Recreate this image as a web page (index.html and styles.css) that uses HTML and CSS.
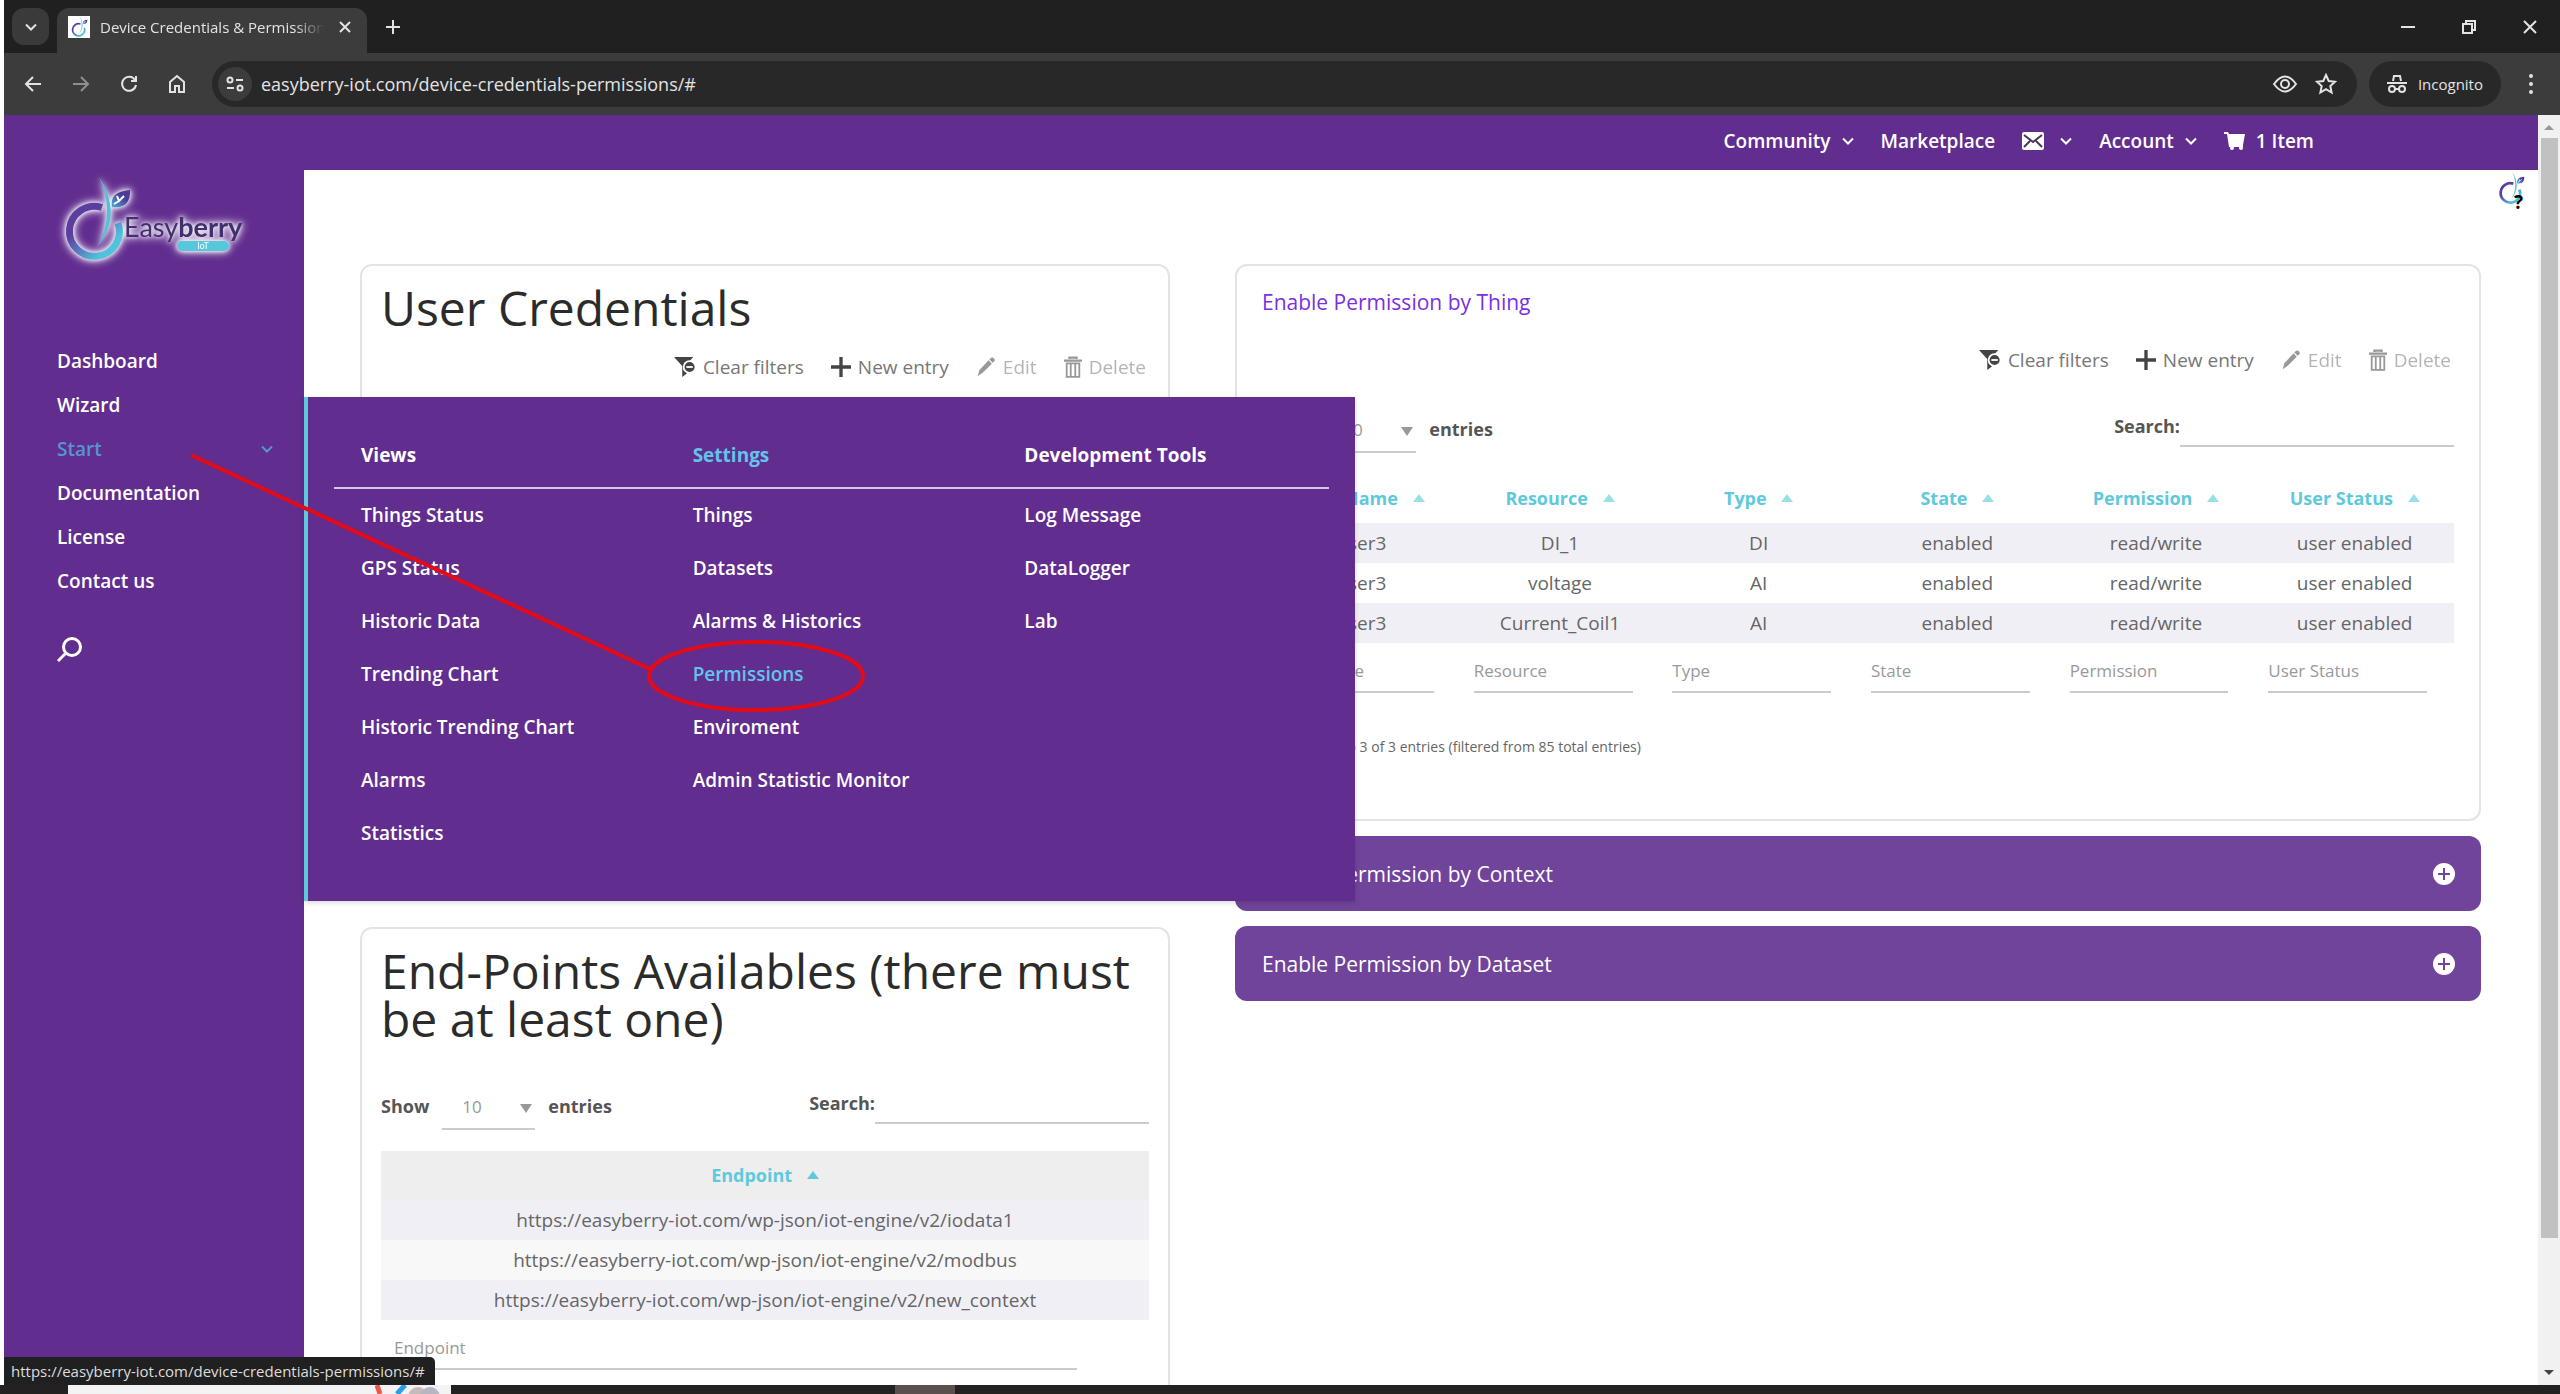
FILE: index.html
```html
<!DOCTYPE html>
<html lang="en">
<head>
<meta charset="utf-8">
<title>Device Credentials &amp; Permissions</title>
<link rel="stylesheet" href="styles.css">
</head>
<body>
  <svg class="defs" aria-hidden="true">
    <defs>
      <linearGradient id="berry" x1="0" y1="0" x2="1" y2="1">
        <stop offset="0.3" stop-color="#5b3fa0"/>
        <stop offset="0.8" stop-color="#4fc3dc"/>
      </linearGradient>
      <linearGradient id="leaf" x1="0" y1="1" x2="1" y2="0">
        <stop offset="0" stop-color="#4fb0dc"/>
        <stop offset="0.6" stop-color="#4a3f98"/>
      </linearGradient>
      <symbol id="logo" viewBox="0 0 72 90">
        <path d="M42 32.500 A25 25 0 1 0 58 48" fill="none" stroke="url(#berry)" stroke-width="7"/>
        <path d="M39 2 C53 24 57 48 37 72 C50 50 50 26 39 2Z" fill="#4fc3dc"/>
        <path d="M52 32 C50 20 58 16 70 15 C71 27 64 34 52 32Z" fill="url(#leaf)"/>
        <path d="M57 21 l2 5 l5 -5 M54 29 l5 -3" fill="none" stroke="#fff" stroke-width="2"/>
      </symbol>
      <symbol id="chevron" viewBox="0 0 12 8">
        <path d="M1 1.5 L6 6.5 L11 1.5" fill="none" stroke="currentColor" stroke-width="2"/>
      </symbol>
      <symbol id="filter" viewBox="0 0 24 24">
        <path d="M0 1 H21 L14 9 V19 L9 23 V11Z" fill="currentColor"/>
        <circle cx="17" cy="12" r="6.5" fill="currentColor" stroke="#fff" stroke-width="2"/>
        <path d="M13.500 12 H20.500" stroke="#fff" stroke-width="2"/>
      </symbol>
      <symbol id="plus" viewBox="0 0 24 24">
        <path d="M12 0 V24 M0 12 H24" stroke="currentColor" stroke-width="4"/>
      </symbol>
      <symbol id="pencil" viewBox="0 0 24 24">
        <path d="M2 23 L4 16 L15 4 L19 8 L8 19Z M16 3 L18 1 Q20 0 22 2 Q23 4 22 5 L20 7Z" fill="currentColor"/>
      </symbol>
      <symbol id="trash" viewBox="0 0 20 24">
        <path d="M0 5 H20 M6 3 V1.500 H14 V3" fill="none" stroke="currentColor" stroke-width="2.500"/>
        <path d="M3 8 V23 H17 V8Z M7.500 9 V22 M12.500 9 V22" fill="none" stroke="currentColor" stroke-width="2"/>
      </symbol>
      <symbol id="circle-plus" viewBox="0 0 24 24">
        <circle cx="12" cy="12" r="11" fill="#fff"/>
        <path d="M12 6 V18 M6 12 H18" stroke="#71449b" stroke-width="2"/>
      </symbol>
    </defs>
  </svg>

  <header class="browser">
    <div class="tab-strip">
      <button class="tab-search" aria-label="Search tabs"><svg width="12" height="8"><use href="#chevron"/></svg></button>
      <div class="tab">
        <span class="favicon"><svg width="18" height="22"><use href="#logo"/></svg></span>
        <span class="tab-title">Device Credentials &amp; Permissions</span>
        <button class="plain" aria-label="Close tab"><svg width="12" height="12" viewBox="0 0 12 12"><path d="M1 1 L11 11 M11 1 L1 11"/></svg></button>
      </div>
      <button class="plain new-tab" aria-label="New tab"><svg width="16" height="16" viewBox="0 0 16 16"><path d="M8 1 V15 M1 8 H15"/></svg></button>
      <div class="window-buttons">
        <button class="plain" aria-label="Minimize"><svg width="14" height="14" viewBox="0 0 14 14"><path d="M0 7 H14"/></svg></button>
        <button class="plain" aria-label="Restore"><svg width="14" height="14" viewBox="0 0 14 14"><path d="M1 4 H10 V13 H1Z M4 4 V1 H13 V10 H10"/></svg></button>
        <button class="plain" aria-label="Close"><svg width="14" height="14" viewBox="0 0 14 14"><path d="M1 1 L13 13 M13 1 L1 13"/></svg></button>
      </div>
    </div>
    <div class="toolbar">
      <button class="plain" aria-label="Back"><svg width="18" height="18" viewBox="0 0 18 18"><path d="M17 9 H2 M9 2 L2 9 L9 16"/></svg></button>
      <button class="plain off" aria-label="Forward"><svg width="18" height="18" viewBox="0 0 18 18"><path d="M1 9 H16 M9 2 L16 9 L9 16"/></svg></button>
      <button class="plain" aria-label="Reload"><svg width="18" height="18" viewBox="0 0 18 18"><path d="M15 5 A7 7 0 1 0 16 10 M16 1 V6 H11"/></svg></button>
      <button class="plain" aria-label="Home"><svg width="18" height="20" viewBox="0 0 18 20"><path d="M2 8 L9 2 L16 8 V18 H11 V12 H7 V18 H2Z"/></svg></button>
      <div class="address">
        <span class="site-info"><svg width="18" height="16" viewBox="0 0 18 16"><circle cx="4" cy="4" r="2.500"/><path d="M10 4 H17 M1 12 H8"/><circle cx="14" cy="12" r="2.500"/></svg></span>
        <input type="text" aria-label="Address" value="easyberry-iot.com/device-credentials-permissions/#">
        <svg width="26" height="18" viewBox="0 0 26 18"><path d="M2 9 Q13 -6 24 9 Q13 24 2 9Z"/><circle cx="13" cy="9" r="4"/></svg>
        <svg width="22" height="22" viewBox="0 0 22 22"><path d="M11 2 L13.700 8 L20 8.700 L15.300 13 L16.600 19.500 L11 16.200 L5.400 19.500 L6.700 13 L2 8.700 L8.300 8Z"/></svg>
      </div>
      <div class="incognito">
        <svg width="20" height="20" viewBox="0 0 20 20"><path d="M6 7 L7 2 H13 L14 7 M0 9 H20"/><circle cx="5" cy="15" r="3"/><circle cx="15" cy="15" r="3"/><path d="M8 15 H12"/></svg>
        Incognito
      </div>
      <button class="plain dots" aria-label="Menu"><svg width="4" height="20" viewBox="0 0 4 20"><circle cx="2" cy="2" r="1"/><circle cx="2" cy="10" r="1"/><circle cx="2" cy="18" r="1"/></svg></button>
    </div>
  </header>

  <div class="viewport">
    <aside class="sidebar">
      <div class="brand">
        <svg class="brand-mark" width="72" height="90"><use href="#logo"/></svg>
        <span class="brand-name">Easy<b>berry</b><small>IoT</small></span>
      </div>
      <nav class="side-nav">
        <a href="#">Dashboard</a>
        <a href="#">Wizard</a>
        <a href="#" class="active">Start <svg width="12" height="8"><use href="#chevron"/></svg></a>
        <a href="#">Documentation</a>
        <a href="#">License</a>
        <a href="#">Contact us</a>
      </nav>
      <button class="plain side-search" aria-label="Search"><svg width="26" height="26" viewBox="0 0 26 26"><circle cx="15" cy="10" r="8.500"/><path d="M9 16 L1 24"/></svg></button>

      <div class="mega-menu">
        <div class="mega-heads">
          <a href="#">Views</a>
          <a href="#" class="hover">Settings</a>
          <a href="#">Development Tools</a>
        </div>
        <div class="mega-columns">
          <div class="mega-column">
            <a href="#">Things Status</a>
            <a href="#">GPS Status</a>
            <a href="#">Historic Data</a>
            <a href="#">Trending Chart</a>
            <a href="#">Historic Trending Chart</a>
            <a href="#">Alarms</a>
            <a href="#">Statistics</a>
          </div>
          <div class="mega-column">
            <a href="#">Things</a>
            <a href="#">Datasets</a>
            <a href="#">Alarms &amp; Historics</a>
            <a href="#" class="hover">Permissions</a>
            <a href="#">Enviroment</a>
            <a href="#">Admin Statistic Monitor</a>
          </div>
          <div class="mega-column">
            <a href="#">Log Message</a>
            <a href="#">DataLogger</a>
            <a href="#">Lab</a>
          </div>
        </div>
      </div>
      <!-- red pointer from Start to Permissions -->
      <svg class="pointer" width="700" height="280" viewBox="0 0 700 280">
        <path d="M10 15 L469 229"/>
        <ellipse cx="575" cy="236" rx="107" ry="34"/>
      </svg>
    </aside>

    <div class="page">
      <nav class="top-nav">
        <a href="#">Community <svg width="12" height="8"><use href="#chevron"/></svg></a>
        <a href="#">Marketplace</a>
        <a href="#" class="mail" aria-label="Messages">
          <svg width="22" height="18" viewBox="0 0 22 18"><rect width="22" height="18" rx="2" fill="#fff"/><path d="M2 3 L11 10 L20 3 M2 15 L8 9 M20 15 L14 9" fill="none" stroke="#47365c" stroke-width="2"/></svg>
          <svg width="12" height="8"><use href="#chevron"/></svg>
        </a>
        <a href="#">Account <svg width="12" height="8"><use href="#chevron"/></svg></a>
        <a href="#"><svg width="21" height="18" viewBox="0 0 21 18"><path d="M0 0 H4 L5 2 H21 L19 13 H19 V15 H5 L3 2 H0Z" fill="#fff"/><circle cx="8" cy="16" r="2" fill="#fff"/><circle cx="17" cy="16" r="2" fill="#fff"/></svg> 1 Item</a>
      </nav>
      <a href="#" class="help" aria-label="Help"><svg width="28" height="35"><use href="#logo"/></svg><b>?</b></a>

      <main class="content">
        <div class="column">
          <section class="card credentials">
            <h1>User Credentials</h1>
            <div class="actions">
              <button><svg width="22" height="24"><use href="#filter"/></svg>Clear filters</button>
              <button><svg width="20" height="22"><use href="#plus"/></svg>New entry</button>
              <button disabled><svg width="20" height="22"><use href="#pencil"/></svg>Edit</button>
              <button disabled><svg width="18" height="22"><use href="#trash"/></svg>Delete</button>
            </div>
          </section>

          <section class="card endpoints">
            <h1>End-Points Availables (there must be at least one)</h1>
            <div class="controls">
              <label class="length">Show <span class="select"><select><option>10</option></select></span> entries</label>
              <label class="search">Search:<input type="search"></label>
            </div>
            <table>
              <thead>
                <tr><th>Endpoint <i class="sort"></i></th></tr>
              </thead>
              <tbody>
                <tr><td>https://easyberry-iot.com/wp-json/iot-engine/v2/iodata1</td></tr>
                <tr><td>https://easyberry-iot.com/wp-json/iot-engine/v2/modbus</td></tr>
                <tr><td>https://easyberry-iot.com/wp-json/iot-engine/v2/new_context</td></tr>
              </tbody>
              <tfoot>
                <tr><td><input type="text" placeholder="Endpoint" aria-label="Endpoint"></td></tr>
              </tfoot>
            </table>
          </section>
        </div>

        <div class="column">
          <section class="card permissions">
            <h2>Enable Permission by Thing</h2>
            <div class="actions">
              <button><svg width="22" height="24"><use href="#filter"/></svg>Clear filters</button>
              <button><svg width="20" height="22"><use href="#plus"/></svg>New entry</button>
              <button disabled><svg width="20" height="22"><use href="#pencil"/></svg>Edit</button>
              <button disabled><svg width="18" height="22"><use href="#trash"/></svg>Delete</button>
            </div>
            <div class="controls">
              <label class="length">Show <span class="select"><select><option>10</option></select></span> entries</label>
              <label class="search">Search:<input type="search"></label>
            </div>
            <table>
              <thead>
                <tr>
                  <th>User Name <i class="sort"></i></th>
                  <th>Resource <i class="sort"></i></th>
                  <th>Type <i class="sort"></i></th>
                  <th>State <i class="sort"></i></th>
                  <th>Permission <i class="sort"></i></th>
                  <th>User Status <i class="sort"></i></th>
                </tr>
              </thead>
              <tbody>
                <tr><td>user3</td><td>DI_1</td><td>DI</td><td>enabled</td><td>read/write</td><td>user enabled</td></tr>
                <tr><td>user3</td><td>voltage</td><td>AI</td><td>enabled</td><td>read/write</td><td>user enabled</td></tr>
                <tr><td>user3</td><td>Current_Coil1</td><td>AI</td><td>enabled</td><td>read/write</td><td>user enabled</td></tr>
              </tbody>
              <tfoot>
                <tr>
                  <td><input type="text" placeholder="User Name" aria-label="User Name"></td>
                  <td><input type="text" placeholder="Resource" aria-label="Resource"></td>
                  <td><input type="text" placeholder="Type" aria-label="Type"></td>
                  <td><input type="text" placeholder="State" aria-label="State"></td>
                  <td><input type="text" placeholder="Permission" aria-label="Permission"></td>
                  <td><input type="text" placeholder="User Status" aria-label="User Status"></td>
                </tr>
              </tfoot>
            </table>
            <p class="info">Showing 1 to 3 of 3 entries (filtered from 85 total entries)</p>
          </section>
          <button class="accordion">Enable Permission by Context <svg width="24" height="24"><use href="#circle-plus"/></svg></button>
          <button class="accordion">Enable Permission by Dataset <svg width="24" height="24"><use href="#circle-plus"/></svg></button>
        </div>
      </main>
    </div>

    <div class="scrollbar">
      <span class="arrow up"></span>
      <span class="thumb"></span>
      <span class="arrow down"></span>
    </div>
    <div class="status">https://easyberry-iot.com/device-credentials-permissions/#</div>
  </div>

  <footer class="taskbar">
    <div class="taskbar-search"><svg width="76" height="9" viewBox="0 0 76 9"><path d="M2 0 L5 9" stroke="#f0564a" stroke-width="5"/><path d="M30 0 L22 9" stroke="#28a0e8" stroke-width="5"/><circle cx="43" cy="12" r="10" fill="#c4bcb8"/><circle cx="55" cy="12" r="10" fill="#b7b5bf"/></svg></div>
    <span class="taskbar-item"></span>
  </footer>
</body>
</html>
```
FILE: styles.css
```css
:root {
  --purple: #612d8f;
  --purple-light: #71449b;
  --cyan: #5fc9dc;
  --text: #666;
  --line: #cbcbcb;
}

* {
  box-sizing: border-box;
}

body {
  margin: 0;
  height: 100vh;
  display: flex;
  flex-direction: column;
  overflow: hidden;
  font-family: "Open Sans", "Noto Sans", sans-serif;
  font-size: 19px;
  color: var(--text);
  background: #fff;
}

a {
  color: inherit;
  text-decoration: none;
}

button, input, select {
  font: inherit;
  color: inherit;
}

svg {
  flex: none;
}

.defs {
  position: absolute;
  width: 0;
  height: 0;
}

.plain {
  display: flex;
  align-items: center;
  justify-content: center;
  padding: 0;
  border: 0;
  background: none;
}

/* browser frame */
.browser {
  flex: none;
  margin-left: 4px;
  background: #3c3c3c;
  color: #e3e3e3;
  font-size: 15px;
}

.browser svg {
  fill: none;
  stroke: currentColor;
  stroke-width: 2;
}

.tab-strip {
  display: flex;
  align-items: center;
  height: 53px;
  padding-left: 8px;
  background: #202020;
}

.tab-search {
  display: flex;
  align-items: center;
  justify-content: center;
  width: 37px;
  height: 37px;
  padding: 0;
  border: 0;
  border-radius: 12px;
  background: #3a3a3a;
}

.tab {
  display: flex;
  align-items: center;
  gap: 10px;
  align-self: flex-end;
  width: 310px;
  height: 45px;
  margin-left: 8px;
  padding: 0 16px 8px 11px;
  border-radius: 12px 12px 0 0;
  background: #3c3c3c;
}

.favicon {
  display: flex;
  justify-content: center;
  width: 22px;
  height: 22px;
  background: #fff;
}

.favicon svg {
  stroke: none;
}

.tab-title {
  flex: 1;
  overflow: hidden;
  white-space: nowrap;
  mask-image: linear-gradient(90deg, #000 85%, transparent 98%);
}

.new-tab {
  margin-left: 18px;
}

.window-buttons {
  display: flex;
  gap: 47px;
  margin: 0 23px 0 auto;
}

.toolbar {
  display: flex;
  align-items: center;
  gap: 30px;
  height: 62px;
  padding: 0 27px 0 20px;
}

.off {
  opacity: 0.5;
}

.address {
  flex: 1;
  display: flex;
  align-items: center;
  gap: 17px;
  height: 46px;
  margin-left: -4px;
  padding: 0 20px 0 6px;
  border-radius: 23px;
  background: #282828;
}

.address input {
  flex: 1;
  margin-left: -8px;
  padding: 0;
  border: 0;
  background: none;
  font-size: 18px;
}

.site-info {
  display: flex;
  align-items: center;
  justify-content: center;
  width: 34px;
  height: 34px;
  border-radius: 17px;
  background: #3c3c3c;
}

.incognito {
  display: flex;
  align-items: center;
  gap: 11px;
  height: 46px;
  margin: 0 -2px 0 -18px;
  padding: 0 18px;
  border-radius: 23px;
  background: #282828;
}

/* web page */
.viewport {
  flex: 1;
  min-height: 0;
  display: flex;
  position: relative;
  margin-left: 4px;
}

.sidebar {
  position: relative;
  z-index: 2;
  flex: none;
  width: 300px;
  padding: 60px 0 0 53px;
  background: var(--purple);
  color: #fff;
  font-weight: 600;
}

.brand {
  display: flex;
  width: 190px;
  height: 94px;
  margin-bottom: 70px;
  padding-left: 3px;
  filter: drop-shadow(0 0 2px #fff) drop-shadow(0 0 4px #fff);
}

.brand-mark {
  margin-right: -8px;
}

.brand-name {
  display: flex;
  flex-wrap: wrap;
  align-content: flex-start;
  padding-top: 38px;
  color: #40306e;
  font-family: Lato, sans-serif;
  font-size: 27px;
  font-weight: 400;
  line-height: 28px;
}

.brand-name b {
  font-weight: 700;
}

.brand-name small {
  width: 52px;
  height: 10px;
  margin-left: 53px;
  border-radius: 5px;
  background: #57c8dc;
  color: #fff;
  font-size: 9px;
  line-height: 10px;
  text-align: center;
}

.side-nav {
  display: flex;
  flex-direction: column;
}

.side-nav a {
  display: flex;
  align-items: center;
  justify-content: space-between;
  height: 44px;
  padding-right: 31px;
}

.side-nav .active {
  color: #5596cf;
}

.side-search {
  margin-top: 34px;
}

.side-search svg {
  fill: none;
  stroke: #fff;
  stroke-width: 3;
}

.mega-menu {
  position: absolute;
  top: 282px;
  left: 300px;
  width: 1051px;
  height: 504px;
  padding: 27px 26px 0;
  border-left: 4px solid var(--cyan);
  background: var(--purple);
  box-shadow: 0 2px 5px rgba(0, 0, 0, 0.15);
}

.mega-heads, .mega-columns {
  display: grid;
  grid-template-columns: repeat(3, 1fr);
}

.mega-heads {
  height: 65px;
  border-bottom: 2px solid #d9c6ec;
  font-weight: 700;
}

.mega-menu a {
  padding-left: 27px;
  line-height: 53px;
}

.mega-heads a {
  line-height: 62px;
}

.mega-column {
  display: flex;
  flex-direction: column;
}

.mega-menu .hover {
  color: #62c4ea;
}

.pointer {
  position: absolute;
  top: 325px;
  left: 177px;
  fill: none;
  stroke: #e30b17;
  stroke-width: 4;
  pointer-events: none;
}

.page {
  flex: 1;
  position: relative;
  overflow: hidden;
}

.top-nav {
  display: flex;
  align-items: center;
  justify-content: flex-end;
  gap: 27px;
  height: 55px;
  padding: 0 224px 4px 0;
  background: var(--purple);
  color: #fff;
  font-weight: 600;
}

.top-nav a {
  display: flex;
  align-items: center;
  gap: 11px;
}

.top-nav .mail {
  gap: 16px;
}

.help {
  position: absolute;
  top: 56px;
  right: 13px;
  color: #000;
}

.help b {
  position: absolute;
  right: 2px;
  bottom: 0;
  line-height: 20px;
}

.content {
  display: grid;
  grid-template-columns: 810fr 1246fr;
  column-gap: 65px;
  padding: 94px 57px 0 56px;
}

.column {
  display: flex;
  flex-direction: column;
  gap: 15px;
  min-width: 0;
}

.card {
  border: 2px solid #e4e4e4;
  border-radius: 12px;
}

.credentials {
  min-height: 628px;
  margin-bottom: 20px;
  padding: 18px 19px 0;
}

.endpoints {
  min-height: 640px;
  padding: 18px 19px 0;
}

.permissions {
  padding: 21px 25px 62px;
}

h1 {
  margin: 0;
  color: #2b2b2b;
  font-size: 48px;
  font-weight: 400;
  line-height: 48px;
}

h2 {
  margin: 0 0 28px;
  color: #7a2fe0;
  font-size: 21px;
  font-weight: 400;
  line-height: 30px;
}

.actions {
  display: flex;
  justify-content: flex-end;
  gap: 27px;
  height: 30px;
  padding-right: 3px;
}

.credentials .actions {
  margin-top: 20px;
}

.actions button {
  display: flex;
  align-items: center;
  gap: 7px;
  padding: 0;
  border: 0;
  background: none;
  color: #777;
}

.actions svg {
  color: #444;
}

.actions button:disabled {
  opacity: 0.55;
}

.controls {
  display: flex;
  justify-content: space-between;
  align-items: flex-start;
  height: 49px;
  margin: 29px 0 21px;
  color: #555;
  font-size: 18px;
  font-weight: 700;
}

.endpoints .controls {
  margin-top: 38px;
}

.length, .search {
  display: flex;
  align-items: center;
}

.length {
  gap: 13px;
}

.select {
  position: relative;
}

.select::after {
  content: "";
  position: absolute;
  top: 23px;
  right: 3px;
  border: 6px solid transparent;
  border-top: 9px solid #999;
  border-bottom: 0;
}

.select select {
  display: block;
  appearance: none;
  width: 93px;
  height: 49px;
  padding: 4px 20px 0;
  border: 0;
  border-bottom: 2px solid var(--line);
  border-radius: 0;
  background: none;
  color: #999;
  font-size: 17px;
  font-weight: 400;
}

.search input {
  width: 274px;
  height: 43px;
  border: 0;
  border-bottom: 2px solid var(--line);
  background: none;
}

table {
  width: 100%;
  table-layout: fixed;
  border-collapse: collapse;
}

th, td {
  padding: 0;
  text-align: center;
}

th {
  height: 49px;
  padding-bottom: 2px;
  color: var(--cyan);
  font-size: 18px;
  font-weight: 700;
}

.sort {
  display: inline-block;
  margin: 0 0 3px 10px;
  border: 6px solid transparent;
  border-top: 0;
  border-bottom: 8px solid #98dfe6;
}

tbody td {
  height: 40px;
}

tbody tr:nth-child(odd) {
  background: #f0eff6;
}

.endpoints thead {
  background: #eee;
}

.endpoints .sort {
  border-bottom-color: var(--cyan);
}

.endpoints tbody tr:nth-child(even) {
  background: #f8f8f8;
}

tfoot td {
  padding: 10px 13px 0;
  text-align: left;
}

tfoot input {
  display: block;
  width: 92%;
  height: 40px;
  padding: 0 0 3px;
  border: 0;
  border-bottom: 2px solid var(--line);
  background: none;
  font-size: 17px;
}

tfoot input::placeholder {
  color: #999;
}

.info {
  margin: 44px 0 0 10px;
  font-size: 14px;
  line-height: 20px;
}

.accordion {
  display: flex;
  align-items: center;
  justify-content: space-between;
  height: 75px;
  padding: 0 25px 0 27px;
  border: 0;
  border-radius: 12px;
  background: var(--purple-light);
  color: #fff;
  font-size: 21px;
}

.scrollbar {
  flex: none;
  display: flex;
  flex-direction: column;
  align-items: center;
  width: 22px;
  padding: 10px 0;
  background: #f1f1f1;
}

.thumb {
  flex: none;
  width: 17px;
  height: 88%;
  margin: 8px 0 auto;
  background: #c1c1c1;
}

.arrow {
  border: 5px solid transparent;
}

.up {
  border-top: 0;
  border-bottom-color: #999;
}

.down {
  border-bottom: 0;
  border-top-color: #444;
}

.status {
  position: absolute;
  z-index: 3;
  left: 0;
  bottom: 0;
  padding: 0 10px 0 7px;
  border-radius: 0 5px 0 0;
  background: #202020;
  color: #ddd;
  font-size: 15px;
  line-height: 28px;
}

.taskbar {
  flex: none;
  display: flex;
  height: 9px;
  padding-left: 68px;
  background: #242220;
}

.taskbar-search {
  display: flex;
  justify-content: flex-end;
  width: 383px;
  background: #f3f3f3;
}

.taskbar-item {
  width: 60px;
  margin-left: 444px;
  background: #5c504e;
}
```
